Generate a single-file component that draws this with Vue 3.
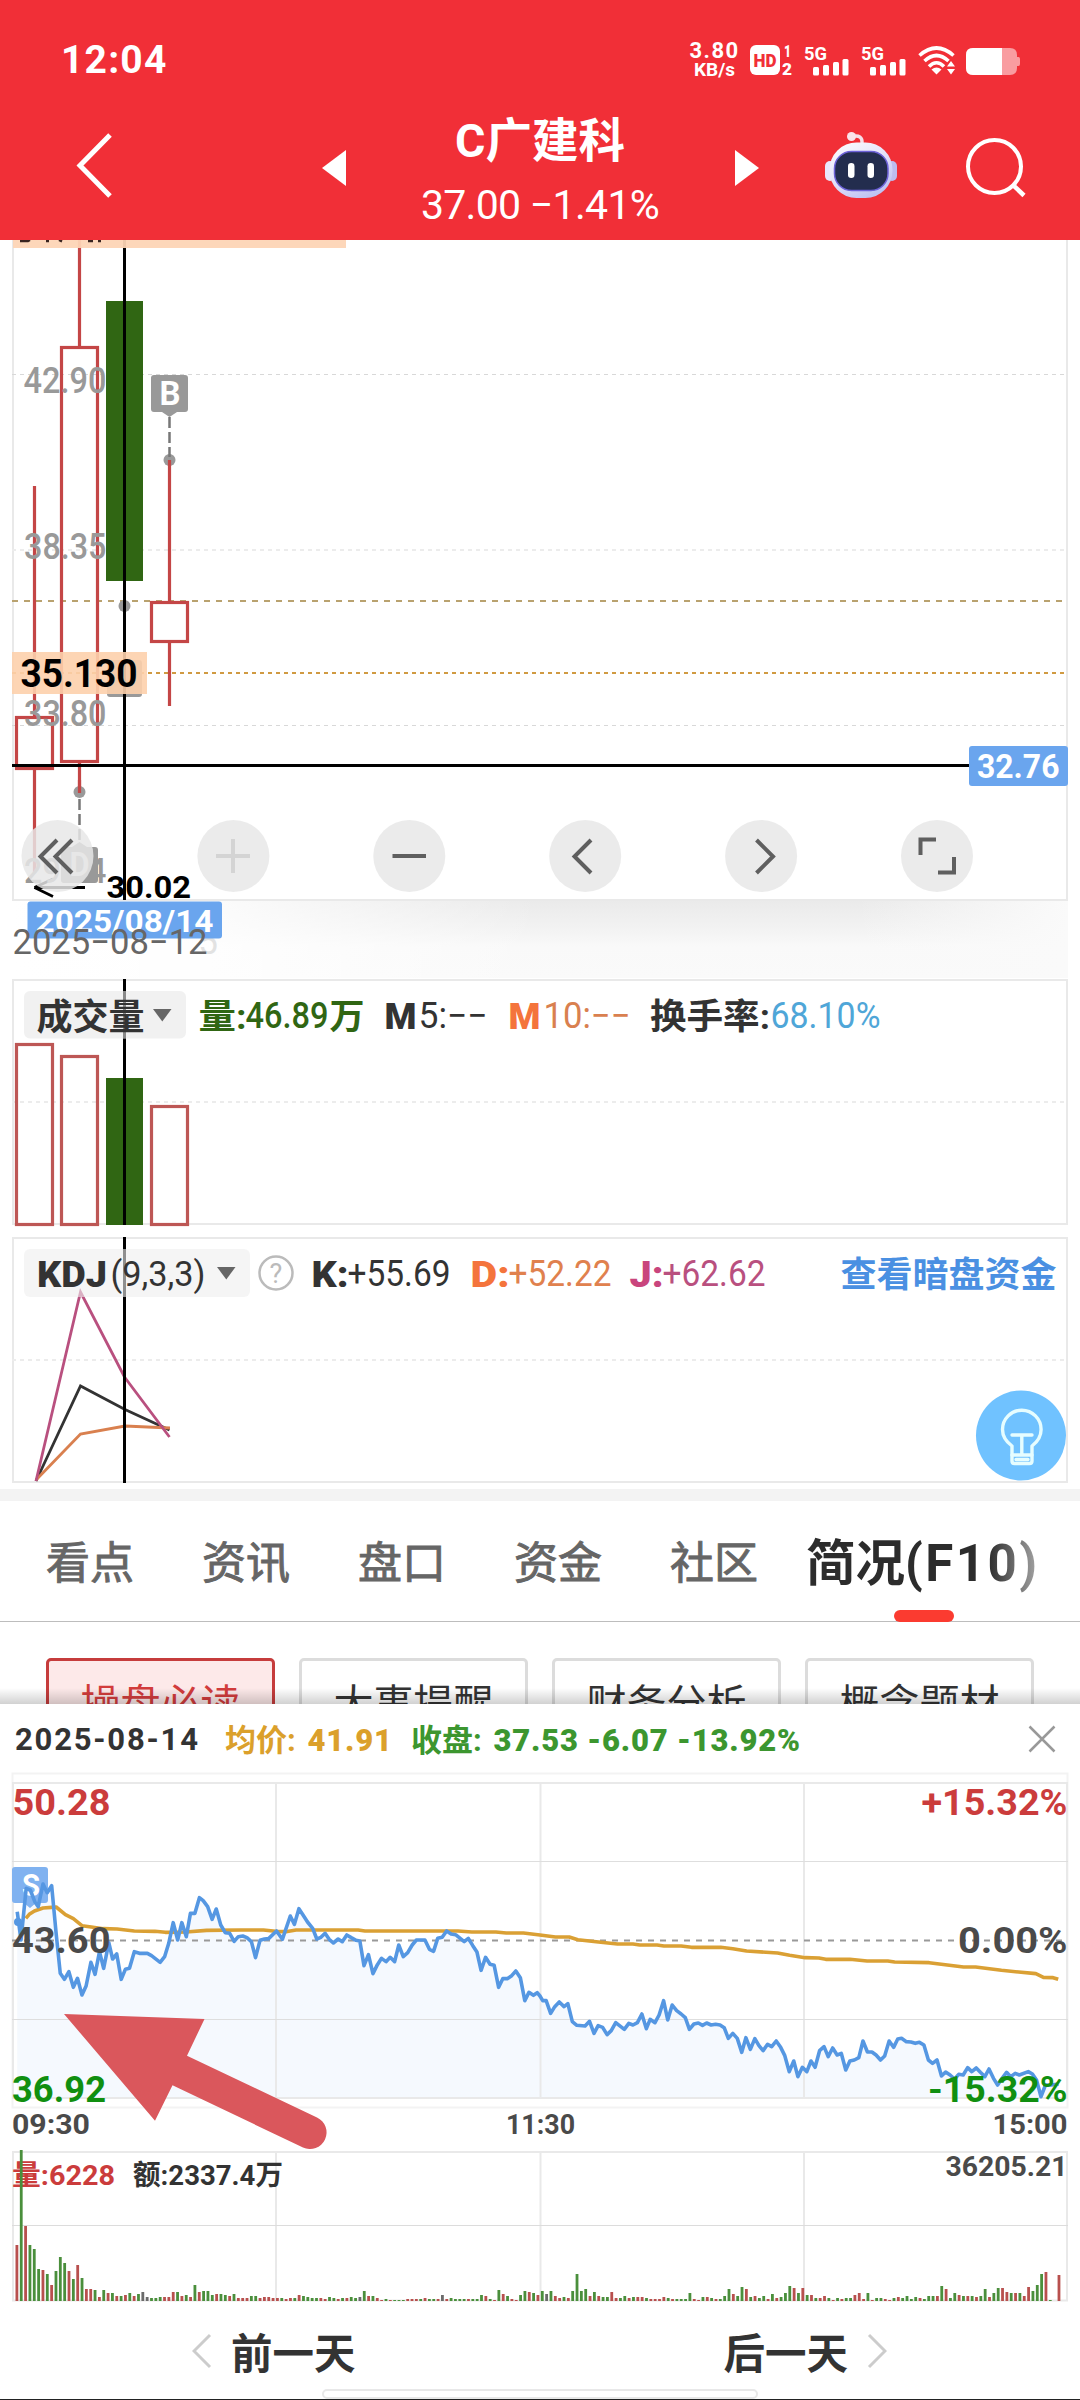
<template>
  <div class="screen">
    <header class="header">
      <div class="status">
        <span class="clock">12:04</span>
        <div class="status-right">
          <div class="speed"><span>3.80</span><span>KB/s</span></div>
          <svg class="hd" width="43" height="31" viewBox="0 0 43 31">
            <rect x="0" y="0" width="30" height="30" rx="6" fill="#fff" />
            <text x="3.5" y="21.5" font-size="18" font-weight="900" textLength="23" lengthAdjust="spacingAndGlyphs" fill="#f12f37">HD</text>
            <text x="34" y="12" font-size="16" font-weight="900" fill="#fff" textLength="7" lengthAdjust="spacingAndGlyphs">1</text>
            <text x="32" y="30" font-size="17" font-weight="900" fill="#fff" textLength="10" lengthAdjust="spacingAndGlyphs">2</text>
          </svg>
          <svg v-for="n in 2" :key="n" class="signal" width="45" height="31" viewBox="0 0 45 31">
            <text x="0" y="14.5" font-size="19" font-weight="700" fill="#fff" textLength="23" lengthAdjust="spacingAndGlyphs">5G</text>
            <g fill="#fff">
              <rect x="9" y="22" width="6" height="8.5" rx="1.5" />
              <rect x="19" y="20" width="6" height="10.5" rx="1.5" />
              <rect x="29" y="17" width="6" height="13.5" rx="1.5" />
              <rect x="38.5" y="14" width="6" height="16.5" rx="1.5" />
            </g>
          </svg>
          <svg class="wifi" width="37" height="29" viewBox="0 0 37 29">
            <g fill="none" stroke="#fff" stroke-width="3.6">
              <path d="M1.5 9.5Q18.5 -5.5 35.5 9.5" />
              <path d="M6.5 15Q18.5 4 30.5 15" />
              <path d="M11 20.5Q18.5 13 26 20.5" />
            </g>
            <path d="M13.5 23.5Q18.5 19.5 23.5 23.5L18.5 28.5z" fill="#fff" />
            <path d="M33 15l4 5.5h-8zM33 28.5l4-5.5h-8z" fill="#fff" />
          </svg>
          <svg class="battery" width="54" height="27" viewBox="0 0 54 27">
            <path d="M7 0h37q7 0 7 7v2h1.5q1.5 0 1.5 2v5q0 2-1.5 2h-1.5v2q0 7-7 7H7q-7 0-7-7V7q0-7 7-7z" fill="#f99ca0" />
            <path d="M7 0h29v27H7q-7 0-7-7V7q0-7 7-7z" fill="#fff" />
          </svg>
        </div>
      </div>
      <div class="nav">
        <svg class="back" width="36" height="66" viewBox="0 0 36 66">
          <path d="M34 2L4 32.5l30 30.5" fill="none" stroke="#fff" stroke-width="5" />
        </svg>
        <svg class="prev-stock" width="24" height="36" viewBox="0 0 24 36"><path d="M24 0v36L0 18z" fill="#fff" /></svg>
        <div class="quote">
          <span class="stock-name">C广建科</span>
          <span class="stock-price">37.00 −1.41%</span>
        </div>
        <svg class="next-stock" width="24" height="36" viewBox="0 0 24 36"><path d="M0 0v36l24-18z" fill="#fff" /></svg>
        <svg class="robot" width="72" height="66" viewBox="0 0 72 66">
          <defs>
            <linearGradient id="shell" x1="0" y1="0" x2=".6" y2="1">
              <stop offset="0" stop-color="#fff" />
              <stop offset=".55" stop-color="#e4e2fa" />
              <stop offset="1" stop-color="#bfc3f2" />
            </linearGradient>
          </defs>
          <path d="M27 4.5Q38 2 37 12" fill="none" stroke="#f6dfe8" stroke-width="3.5" />
          <circle cx="26.5" cy="4.5" r="4.5" fill="#fbe3ea" />
          <rect x="0" y="29" width="10" height="20" rx="5" fill="#e9e6fb" />
          <rect x="62" y="29" width="10" height="20" rx="5" fill="#bdbcee" />
          <rect x="4.500" y="10.5" width="63" height="55.5" rx="27" fill="url(#shell)" />
          <rect x="9.500" y="19.5" width="53.5" height="39" rx="17" fill="#232d4e" stroke="#6d62d8" stroke-width="1.5" />
          <rect x="23" y="31" width="6.5" height="15" rx="3.2" fill="#fff" />
          <rect x="42.5" y="31" width="6.5" height="15" rx="3.2" fill="#fff" />
        </svg>
        <svg class="search" width="62" height="62" viewBox="0 0 62 62">
          <circle cx="29.5" cy="30.5" r="26.5" fill="none" stroke="#fff" stroke-width="4" />
          <path d="M47.5 48.5l11.500 11" stroke="#fff" stroke-width="4.5" />
        </svg>
      </div>
    </header>

    <!-- daily candles -->
    <svg class="candles" width="1080" height="738" viewBox="0 240 1080 738">
      <defs>
        <linearGradient id="shade" x1="0" y1="0" x2="0" y2="1">
          <stop offset="0" stop-color="#eaeaea" />
          <stop offset=".35" stop-color="#f2f2f2" />
          <stop offset=".6" stop-color="#f9f9f9" />
          <stop offset="1" stop-color="#fafafa" />
        </linearGradient>
        <linearGradient id="shadeFade" x1="0" y1="0" x2="1" y2="0">
          <stop offset="0" stop-color="#fff" />
          <stop offset=".18" stop-color="#fff" stop-opacity=".85" />
          <stop offset=".5" stop-color="#fff" stop-opacity="0" />
          <stop offset=".8" stop-color="#fafafa" stop-opacity="0" />
          <stop offset="1" stop-color="#fafafa" />
        </linearGradient>
      </defs>
      <rect x="12" y="900" width="1056" height="78" fill="url(#shade)" />
      <rect x="12" y="900" width="1056" height="78" fill="url(#shadeFade)" />
      <path d="M13 240V900M1067 240V900M12 900H1068" class="frame" />
      <path d="M12 374.5H1068M12 725.5H1068" class="grid-dash thin" />
      <path d="M12 550H1068" class="grid-dash" />
      <path d="M12 601H1068" stroke="#b9a26f" stroke-width="2" stroke-dasharray="6 6" />
      <path d="M12 673H1068" stroke="#d09a42" stroke-width="2" stroke-dasharray="4 4" />

      <g class="up">
        <path d="M34.500 486V717M34.500 769V872M79.500 240V347M79.500 763V793" />
        <rect x="16.500" y="717.5" width="36" height="51" />
        <rect x="61.500" y="347.5" width="36" height="414" />
      </g>
      <rect x="106" y="301" width="37" height="280" fill="#306613" />
      <g fill="#999">
        <circle cx="79.500" cy="792" r="6" />
        <circle cx="124.5" cy="606" r="6" />
        <circle cx="169.5" cy="460" r="6" />
        <path d="M154 375h31q3 0 3 3v31q0 3-3 3h-8l-7.5 5-7.5-5h-8q-3 0-3-3v-31q0-3 3-3z" />
        <rect x="107" y="660" width="35" height="37" rx="3" />
        <path d="M64 847h8l7.5-5 7.5 5h8q3 0 3 3v30q0 3-3 3H64q-3 0-3-3v-30q0-3 3-3z" />
      </g>
      <path d="M169.5 417V457M79.500 799V843" stroke="#777" stroke-width="2.5" stroke-dasharray="11 4" fill="none" />
      <g class="up">
        <path d="M169.5 460V601M169.5 642V706M79.500 780V793" />
        <rect x="151.5" y="602.5" width="36" height="39" />
      </g>
      <path d="M12 765.5H969M124.5 240V900" stroke="#000" stroke-width="3" />
      <path d="M85 887.5H34.500L53 896.5M34.500 887.5L53 879" fill="none" stroke="#000" stroke-width="2.800" />
      <rect x="13" y="240" width="333" height="8" fill="#fdd5b6" opacity=".94" />
      <path d="M20 241h8l2-1M46 241h3M59 240l3 1.500M88 241h5M98 241h3" fill="none" stroke="#3a2420" stroke-width="2.500" />
      <rect x="12" y="652" width="135" height="42" fill="#fdd0ac" opacity=".9" />
      <rect x="969" y="746" width="99" height="40" rx="3" fill="#6aa5ee" />
      <text x="218" y="954" font-size="35" fill="#e2e2e2" text-anchor="end">5</text>
      <rect x="27.5" y="901.5" width="194.5" height="37" rx="3" fill="#6aa5ee" />
      <text
        v-for="t in candleTexts"
        :key="t.text"
        :x="t.x - 1.5"
        :y="t.y"
        :font-size="t.size"
        :font-weight="t.weight"
        :fill="t.fill"
        :textLength="t.w + 3"
        lengthAdjust="spacingAndGlyphs"
      >{{ t.text }}</text>

      <g fill="#e7e7e7" fill-opacity=".84">
        <circle v-for="i in 6" :key="i" :cx="57.5 + (i - 1) * 175.9" cy="856" r="36" />
      </g>
      <g fill="none" stroke="#5f5f5f" stroke-width="4">
        <path d="M57 840L40.500 856.5 57 873M72 840L55.500 856.5 72 873" />
        <path d="M233 839V873M216 856H250" stroke="#d4d4d4" />
        <path d="M392.5 856H426" />
        <path d="M591 840L574.5 856.5 591 873" />
        <path d="M756.5 840L773 856.5 756.5 873" />
        <path d="M936 839.5H920.5V855M938 872.5H954V857" />
      </g>
    </svg>

    <!-- volume -->
    <svg class="volume" width="1080" height="259" viewBox="0 978 1080 259">
      <rect x="13" y="980" width="1054" height="244" class="frame" />
      <path d="M12 1102H1068" class="grid-dash" />
      <g class="up soft">
        <rect x="16.500" y="1044.5" width="36" height="180" />
        <rect x="61.500" y="1056.5" width="36" height="168" />
        <rect x="151.5" y="1106.5" width="36" height="118" />
      </g>
      <rect x="106" y="1078" width="37" height="147" fill="#306613" />
      <path d="M124.5 979V1225" stroke="#000" stroke-width="3" />
      <rect x="24" y="991" width="162" height="47.5" rx="6" fill="#efefef" fill-opacity=".9" />
      <path d="M124.500 991V1038.500" stroke="#555" stroke-width="3" opacity=".6" />
      <path d="M153 1009h18.5l-9.2 12.5z" fill="#666" />
      <text
        v-for="t in volumeTexts"
        :key="t.text + t.x"
        :x="t.x - 1.5"
        :y="t.y"
        :font-size="t.size"
        :font-weight="t.weight"
        :fill="t.fill"
        :textLength="t.w + 3"
        lengthAdjust="spacingAndGlyphs"
      >{{ t.text }}</text>
    </svg>

    <!-- KDJ -->
    <svg class="kdj" width="1080" height="252" viewBox="0 1237 1080 252">
      <rect x="13" y="1238" width="1054" height="244" class="frame" />
      <path d="M12 1360H1068" class="grid-dash" />
      <g fill="none" stroke-width="2.8">
        <path d="M36 1481L80.500 1386 125 1409.5 169.5 1430" stroke="#333" />
        <path d="M36 1480L80.500 1434 125 1426 170 1428" stroke="#d9804f" />
        <path d="M36 1481L80.500 1292 124.5 1377 169.5 1437" stroke="#b9507f" />
      </g>
      <path d="M124.5 1237V1483" stroke="#000" stroke-width="3" />
      <rect x="24" y="1249" width="226" height="48" rx="6" fill="#efefef" fill-opacity=".6" />
      <path d="M217 1267h18.5l-9.2 12.5z" fill="#666" />
      <circle cx="276" cy="1273" r="16.5" fill="none" stroke="#bbb" stroke-width="2.5" />
      <text x="276" y="1282.5" font-size="27" fill="#bbb" text-anchor="middle">?</text>
      <text
        v-for="t in kdjTexts"
        :key="t.text + t.x"
        :x="t.x - 1.5"
        :y="t.y"
        :font-size="t.size"
        :font-weight="t.weight"
        :fill="t.fill"
        :textLength="t.w + 3"
        lengthAdjust="spacingAndGlyphs"
      >{{ t.text }}</text>
      <circle cx="1021" cy="1435.5" r="45" fill="#70c2ff" />
      <g fill="none" stroke="#e6fdff" stroke-width="3.4" stroke-linejoin="round" stroke-linecap="round">
        <path d="M1012 1461V1446Q1002.500 1439 1002.500 1429.500A19.300 19.300 0 0 1 1041.100 1429.500Q1041.100 1439 1032 1446V1461Q1032 1463.500 1029.500 1463.500H1014.500Q1012 1463.500 1012 1461z" />
        <path d="M1012 1435H1032M1021.800 1435.500V1454M1012 1455H1032M1016 1459.500H1028" />
      </g>
    </svg>

    <div class="divider"></div>

    <nav class="tabs">
      <span v-for="tab in tabs" :key="tab" class="tab">{{ tab }}</span>
      <span class="tab active">简况<i>(F10)</i></span>
    </nav>

    <div class="chips">
      <span v-for="(chip, i) in chips" :key="chip" class="chip" :class="{ on: i === 0 }">{{ chip }}</span>
      <div class="chips-shadow"></div>
    </div>

    <section class="sheet">
      <div class="sheet-head">
        <span class="day">2025-08-14</span>
        <span class="avg">均价: <b>41.91</b></span>
        <span class="close-price">收盘: <b>37.53 -6.07 -13.92%</b></span>
        <svg class="close" width="28" height="28" viewBox="0 0 28 28">
          <path d="M1.5 1.5L26.5 26.5M26.5 1.5L1.5 26.5" stroke="#999" stroke-width="2.5" />
        </svg>
      </div>

      <!-- intraday price and volume -->
      <svg class="intraday" width="1080" height="532" viewBox="0 1770 1080 532">
        <rect x="12.5" y="1773.5" width="1055" height="334" fill="none" stroke="#f3f3f3" stroke-width="2" />
        <path :d="areaPath" :transform="plot" fill="#f5f9fe" />
        <path d="M13 1783H1067V2098H13z" class="frame" />
        <path d="M276 1783V2098M540.5 1783V2098M804 1783V2098" class="frame" />
        <path d="M12 1861.5H1068M12 2019.5H1068" stroke="#dedede" />
        <path d="M12 1940.5H1068" stroke="#999" stroke-width="2" stroke-dasharray="6 6" />
        <path d="M15 1867h30q3 0 3 3v30q0 3-3 3h-9l-6 5-6-5h-9q-3 0-3-3v-30q0-3 3-3z" fill="#80b2f0" />
        <text x="22" y="1896" font-size="31" font-weight="700" fill="#fff" textLength="18" lengthAdjust="spacingAndGlyphs">S</text>
        <path :d="avgPath" :transform="plot" class="line" stroke="#daa034" />
        <path :d="pricePath" :transform="plot" class="line" stroke="#5597e2" />
        <circle cx="18" cy="1922" r="4" fill="#5597e2" />

        <path d="M13 2152H1067V2300.5H13z" class="frame" />
        <path d="M276 2152V2301M540.5 2152V2301M804 2152V2301" class="frame" />
        <path d="M12 2225.5H1068" stroke="#dcdcdc" />
        <text
          v-for="t in sheetTexts"
          :key="t.text"
          :x="t.x - 1.5"
          :y="t.y"
          :font-size="t.size"
          :font-weight="t.weight"
          :fill="t.fill"
          :textLength="t.w + 3"
          lengthAdjust="spacingAndGlyphs"
        >{{ t.text }}</text>
        <rect v-for="b in bars" :key="b.x" :x="b.x" :y="2301 - b.h" width="2.8" :height="b.h" :fill="b.fill" />
        <path d="M64 2014L204.5 2019 187 2055.7 317 2117.5A16 16 0 0 1 303 2147.5L172.5 2085.3 155 2120.7z" fill="#da575c" />
      </svg>

      <div class="pager">
        <div class="page-btn">
          <svg width="20" height="36" viewBox="0 0 20 36"><path d="M18 2L2 18l16 16" fill="none" stroke="#ccc" stroke-width="3" /></svg>
          <span>前一天</span>
        </div>
        <div class="page-btn">
          <span>后一天</span>
          <svg width="20" height="36" viewBox="0 0 20 36"><path d="M2 2l16 16L2 34" fill="none" stroke="#ccc" stroke-width="3" /></svg>
        </div>
      </div>
      <div class="home-bar"></div>
      <div class="bottom-edge"></div>
    </section>
  </div>
</template>

<script setup>
const tabs = ['看点', '资讯', '盘口', '资金', '社区']
const chips = ['操盘必读', '大事提醒', '财务分析', '概念题材']

// x: left, y: baseline, w: drawn width
const label = (text, x, y, w, size, fill, weight = 500) => ({ text, x, y, w, size, fill, weight })

const candleTexts = [
  label('42.90', 25, 392.5, 80, 37, '#999'),
  label('38.35', 25.5, 558.5, 79.5, 37, '#999'),
  label('33.80', 25.5, 725.5, 79.5, 37, '#999'),
  label('29.24', 25.5, 882.5, 79.5, 35, '#999'),
  label('35.130', 22, 686.5, 114, 38, '#000', 700),
  label('32.76', 978.5, 777.5, 79.5, 33, '#fff', 700),
  label('30.02', 108, 898, 81.5, 31, '#000', 700),
  label('2025/08/14', 37, 932, 175, 32, '#fff', 700),
  label('2025−08−12', 14, 954, 192, 35, '#666', 400),
  label('B', 161, 405, 18, 33, '#fff', 700),
  label('D', 71, 876, 17, 33, '#e3e3e3', 700)
]

const volumeTexts = [
  label('成交量', 38, 1030, 105, 36, '#333', 700),
  label('量:', 200, 1028.5, 45, 35, '#306613', 700),
  label('46.89', 247, 1028, 80, 36, '#306613'),
  label('万', 331, 1028.5, 32, 35, '#306613', 700),
  label('M', 386, 1029, 29, 37, '#333', 900),
  label('5:−−', 420, 1028, 66, 36, '#333', 400),
  label('M', 510, 1029, 29, 37, '#f4743c', 900),
  label('10:−−', 545, 1028, 84, 36, '#d9804f', 400),
  label('换手率:', 651.5, 1029, 117, 35, '#333', 700),
  label('68.10%', 772, 1028, 107, 36, '#4fa6d8', 400)
]

const kdjTexts = [
  label('KDJ', 38.5, 1287, 67, 37, '#333', 900),
  label('(9,3,3)', 112, 1286, 92, 35, '#333', 400),
  label('K:', 313, 1287, 34, 37, '#333', 900),
  label('+55.69', 349, 1286, 100, 36, '#333', 400),
  label('D:', 472, 1287, 36, 37, '#f4743c', 900),
  label('+52.22', 510, 1286, 100, 36, '#e0814e', 400),
  label('J:', 631, 1287, 31, 37, '#c9457d', 900),
  label('+62.62', 664, 1286, 100, 36, '#b9507f', 400),
  label('查看暗盘资金', 842, 1286.5, 213, 35.5, '#4a90e2', 700)
]

const sheetTexts = [
  label('50.28', 14, 1815, 95, 37, '#cb3c3c', 700),
  label('43.60', 13.5, 1953, 95.5, 37, '#4a4a4a', 700),
  label('36.92', 13.5, 2101.5, 91, 37, '#108f10', 700),
  label('+15.32%', 923, 1815, 143, 37, '#cb3c3c', 700),
  label('0.00%', 959.5, 1953, 106.5, 37, '#4a4a4a', 700),
  label('-15.32%', 929.5, 2101.5, 136.5, 37, '#108f10', 700),
  label('09:30', 13.5, 2134, 75, 28, '#4a4a4a', 700),
  label('11:30', 507.5, 2134, 66, 28, '#4a4a4a', 700),
  label('15:00', 994, 2134, 72, 28, '#4a4a4a', 700),
  label('量:6228', 13.5, 2184.5, 100, 28, '#cb3c3c', 700),
  label('额:2337.4万', 134.5, 2184.5, 147, 28, '#333', 700),
  label('36205.21', 947, 2176, 119, 28, '#4a4a4a', 700)
]

// plot units of the two trading sessions
const plot = 'translate(0 1760) scale(.34436 .33333)'
const morning = '50,455 61,540 76,385 88,390 101,425 111,440 125,372 137,398 150,377 163,520 175,640 187,658 200,635 213,682 225,655 238,705 250,678 264,607 276,643 289,575 301,625 316,548 327,597 339,582 352,658 364,628 376,625 390,575 405,580 428,580 440,587 465,607 478,590 490,550 503,488 516,540 528,488 541,530 553,460 566,460 579,413 590,422 603,440 616,478 628,447 641,495 654,518 667,520 680,544 692,530 705,528 717,533 730,545 742,593 755,541 768,537 780,536 803,513 820,538 843,468 855,493 868,446 880,465 893,486 908,505 920,537 932,532 944,520 956,538 968,549 982,537 994,545 1007,525 1020,533 1034,541 1045,543 1057,617 1070,584 1083,641 1096,614 1108,595 1121,605 1133,592 1146,605 1158,555 1171,590 1184,578 1197,555 1209,540 1234,540 1247,568 1259,574 1271,535 1284,532 1297,513 1310,522 1323,524 1348,545 1360,535 1373,557 1385,576 1397,631 1410,592 1423,613 1435,616 1448,682 1460,656 1473,656 1486,647 1498,633 1511,653 1524,722 1536,697 1549,706 1560,698'
const afternoon = '0,708 8,722 18,722 31,760 43,740 56,726 70,740 81,731 94,785 107,796 131,798 144,784 157,820 169,797 182,802 195,824 207,812 220,788 245,808 258,790 270,795 283,788 296,762 309,806 320,778 334,788 346,765 359,722 371,780 384,735 397,752 410,762 422,773 434,808 447,792 460,789 472,796 484,789 497,795 510,793 523,795 535,803 547,835 560,820 573,835 586,877 598,833 611,868 624,836 636,857 648,872 661,853 673,860 686,843 699,862 711,887 724,935 737,903 749,950 762,922 775,935 787,903 799,922 812,872 825,860 837,890 850,864 863,885 875,880 888,930 900,903 913,900 926,893 938,843 951,876 964,876 976,885 989,900 1001,888 1014,843 1027,862 1039,837 1050,835 1064,845 1077,846 1090,850 1102,847 1115,855 1128,900 1140,910 1153,900 1166,948 1178,936 1191,945 1204,957 1216,943 1229,945 1242,923 1254,935 1267,924 1279,937 1292,950 1304,927 1317,955 1329,975 1342,955 1355,937 1367,950 1380,940 1392,945 1418,935 1430,942 1442,960 1455,1010 1468,975 1485,975 1506,972'
const avgMorning = '75,475 85,463 100,453 125,444 150,442 163,441 190,464 213,476 238,497 265,501 300,506 340,507 390,513 450,514 480,517 540,516 600,511 700,510 765,510 800,514 830,515 860,510 1040,510 1060,513 1330,513 1370,516 1440,516 1470,519 1520,519'
const avgAfternoon = '0,525 45,531 85,531 110,539 170,546 225,552 270,552 290,555 340,555 360,558 410,558 440,562 525,562 560,566 600,573 690,579 725,586 770,593 810,594 830,598 900,598 950,603 1010,603 1030,606 1130,608 1230,621 1265,621 1340,631 1440,641 1462,652 1490,653 1505,658'

const points = (str, dx) => str.split(' ').map((p) => {
  const [x, y] = p.split(',').map(Number)
  return `${x + dx} ${y}`
})
const toPath = (am, pm) => 'M' + [...points(am, 0), ...points(pm, 1568)].join('L')

const pricePath = toPath(morning, afternoon)
const avgPath = toPath(avgMorning, avgAfternoon)
const areaPath = pricePath + 'V1014H50z'

// one bar per minute: colour + height
const colors = { r: '#b8504e', g: '#4a8f3c', k: '#6b6b6b' }
const ticks = 'r56 g151 r75 g56 g52 g32 r31 g27 r16 g30 g44 g38 r30 g22 r36 g23 r12 r12 g11 r4 g11 r8 g8 r5 g5 r6 g8 r5 g7 k9 k4 g3 g3 g4 r4 r4 r9 g9 r5 g6 r4 g16 r9 g10 g10 g6 r7 g7 g6 r5 g7 r3 r3 r3 g5 g5 r3 r4 r4 r3 r3 g3 r2 r3 g3 r6 g5 g4 g3 g3 r3 r2 g4 g3 r2 g3 r3 g4 g3 k4 g10 r5 g5 r3 r1 g2 r1 g1 g1 g1 r2 r2 r2 g2 r3 g2 g2 r2 k6 r2 g3 g2 g2 g2 r2 g2 g2 g6 r5 g2 r1 g11 r7 g5 r2 r1 g6 g10 r9 g8 r6 g10 k7 g10 r5 r3 g4 r3 g10 g27 g10 g12 r5 g9 r5 g4 g4 r9 r3 g3 g5 r3 g4 r4 r4 g3 r2 r2 r2 r4 g3 r2 g2 g2 g2 g8 r2 r1 g4 r4 g3 r2 g2 g5 g12 r7 g5 g14 r12 g4 r5 g3 g5 r2 g7 r3 g4 g8 g15 r13 g8 r13 g6 r6 g3 r3 r5 g3 r1 g3 r2 g3 g3 r6 r8 r2 g8 r1 g3 g3 r2 r1 g3 r4 g3 g5 g2 g4 r3 g2 g5 g5 r5 g15 r12 g3 g8 r6 g5 r5 g5 r4 g5 g12 r4 g8 g13 r13 r9 g8 r8 g8 r5 r14 g10 g16 g27 r29 g1 k0 r26'
const bars = ticks.split(' ').map((t, i) => ({
  x: 15.5 + i * 4.342,
  h: Number(t.slice(1)),
  fill: colors[t[0]]
}))
</script>

<style>
body {
  background: #fff;
}
</style>

<style scoped>
.screen {
  width: 1080px;
  height: 2400px;
  overflow: hidden;
  background: #fff;
  color: #333;
  font-family: Roboto, "Noto Sans CJK SC", sans-serif;
}

svg {
  display: block;
  flex: none;
}

/* header */
.header {
  height: 240px;
  background: #f12f37;
  color: #fff;
}

.header svg {
  overflow: visible;
}

.status {
  display: flex;
  justify-content: space-between;
  height: 116px;
  padding: 0 60px 0 61px;
}

.clock {
  padding-top: 37px;
  font-size: 39px;
  line-height: 46px;
  font-weight: 700;
  letter-spacing: 1.2px;
}

.status-right {
  display: flex;
  align-items: flex-start;
}

.speed {
  display: flex;
  flex-direction: column;
  align-items: center;
  width: 51px;
  margin: 41px 10px 0 0;
  font-size: 22px;
  line-height: 19px;
  font-weight: 700;
  letter-spacing: 1.5px;
  white-space: nowrap;
}

.speed span + span {
  font-size: 19px;
  letter-spacing: 0;
}

.hd {
  margin: 45px 11px 0 0;
}

.signal {
  margin: 45px 12px 0 0;
}

.wifi {
  margin: 46px 11px 0 0;
}

.battery {
  margin-top: 48px;
}

.nav {
  display: flex;
  align-items: flex-start;
  height: 124px;
  padding-left: 76px;
}

.back {
  margin-top: 17px;
}

.prev-stock {
  margin: 34px 0 0 210px;
}

.quote {
  display: flex;
  flex-direction: column;
  align-items: center;
  width: 388px;
  white-space: nowrap;
}

.stock-name {
  font-size: 46.5px;
  line-height: 50px;
  font-weight: 700;
}

.stock-price {
  margin-top: 14px;
  font-size: 41px;
  line-height: 50px;
  letter-spacing: -0.7px;
}

.next-stock {
  margin: 34px 0 0 1px;
}

.robot {
  margin: 16px 0 0 66px;
}

.search {
  margin: 20px 0 0 68px;
}

/* charts */
.frame {
  fill: none;
  stroke: #e9e9e9;
  stroke-width: 2;
}

.grid-dash {
  stroke: #ececec;
  stroke-width: 2;
  stroke-dasharray: 4 4;
}

.grid-dash.thin {
  stroke: #d8d8d8;
  stroke-width: 1;
}

.up {
  fill: none;
  stroke: #c44646;
  stroke-width: 3.2;
}

.up.soft {
  stroke: #bd5755;
}

.line {
  fill: none;
  stroke-width: 3.6;
  stroke-linejoin: round;
  vector-effect: non-scaling-stroke;
}

/* tabs */
.divider {
  height: 12px;
  background: #f3f3f3;
}

.tabs {
  position: relative;
  display: flex;
  align-items: center;
  box-sizing: border-box;
  height: 121px;
  padding: 5px 0 0 46px;
  border-bottom: 1px solid #bdbdbd;
}

.tab {
  width: 156px;
  flex: none;
  color: #666;
  font-size: 44px;
  line-height: 60px;
  -webkit-text-stroke: 0.9px #666;
  white-space: nowrap;
}

.tab.active {
  width: auto;
  margin-left: -20px;
  font-size: 49.5px;
  font-weight: 700;
  -webkit-text-stroke: 0;
  background: linear-gradient(90deg, #2c2c2c 78%, #aaa 100%);
  -webkit-background-clip: text;
  background-clip: text;
  color: transparent;
}

.tab.active i {
  font-style: normal;
  font-size: 51px;
  letter-spacing: 2.5px;
}

.tabs::after {
  content: "";
  position: absolute;
  left: 894px;
  bottom: -1px;
  width: 60px;
  height: 12px;
  border-radius: 6px;
  background: #fb3b30;
}

.chips {
  position: relative;
  display: flex;
  gap: 24px;
  height: 82px;
  padding: 36px 46px 0;
  box-sizing: border-box;
  overflow: hidden;
}

.chip {
  flex: none;
  box-sizing: border-box;
  width: 229px;
  height: 90px;
  padding-top: 14px;
  border: 3px solid #dcdcdc;
  border-radius: 5px;
  font-size: 40px;
  line-height: 60px;
  text-align: center;
}

.chip.on {
  border-color: #c63c3c;
  background: #fde9e9;
  color: #d23c3c;
}

.chips-shadow {
  position: absolute;
  left: 0;
  right: 0;
  bottom: 0;
  height: 16px;
  background: linear-gradient(rgba(0, 0, 0, 0), rgba(0, 0, 0, 0.18));
}

/* intraday sheet */
.sheet-head {
  display: flex;
  align-items: center;
  height: 66px;
  padding: 0 24px 0 15px;
  font-size: 31px;
  font-weight: 700;
  white-space: nowrap;
}

.day {
  width: 210px;
  padding-top: 4px;
  letter-spacing: 1.8px;
}

.avg {
  width: 186px;
  color: #dba02b;
}

.avg b,
.close-price b {
  margin-left: 4px;
  letter-spacing: 0.8px;
}

.close-price {
  color: #3c962f;
}

.close {
  margin: 3px 0 0 auto;
}

.pager {
  display: flex;
  justify-content: space-between;
  height: 87px;
  padding: 0 193px 0 192px;
}

.page-btn {
  display: flex;
  align-items: center;
  gap: 19px;
  height: 97px;
  font-size: 41.5px;
  font-weight: 700;
}

.home-bar {
  width: 432px;
  height: 6px;
  margin: 0 auto;
  border: 2px solid #e8e8e8;
  border-radius: 5px;
}

.bottom-edge {
  height: 2px;
  background: #222;
}
</style>
